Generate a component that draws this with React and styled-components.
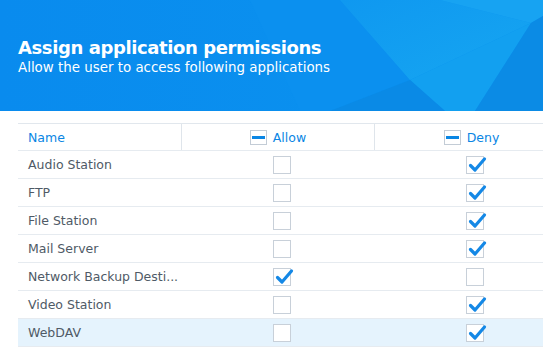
import React from 'react'
import styled, { createGlobalStyle } from 'styled-components'

const GlobalStyle = createGlobalStyle`
  html, body {
    margin: 0;
    padding: 0;
    background: #ffffff;
    overflow: hidden;
  }
  body {
    font-family: "DejaVu Sans", Verdana, sans-serif;
  }
`

const Page = styled.div`
  width: 543px;
  height: 347px;
  overflow: hidden;
`

const Banner = styled.div`
  position: relative;
  height: 111px;
  background: #0a8cee;
  overflow: hidden;
`

const BannerArt = styled.svg`
  position: absolute;
  inset: 0;
  width: 100%;
  height: 100%;
`

const BannerText = styled.div`
  position: relative;
  padding: 37px 0 0 18px;
  color: #ffffff;
`

const Title = styled.h1`
  margin: 0;
  font-size: 18px;
  line-height: 22px;
  font-weight: bold;
  letter-spacing: -0.4px;
`

const Subtitle = styled.p`
  margin: 1px 0 0;
  font-size: 13.4px;
  line-height: 16px;
`

const Table = styled.div`
  margin: 12px 0 0 18px;
  width: 550px;
  border-top: 1px solid #e1e7ed;
`

const Row = styled.div`
  display: grid;
  grid-template-columns: 163px 193px 194px;
  height: ${p => (p.$head ? '26px' : '27px')};
  border-bottom: 1px solid #e6ebf0;
  background: ${p => (p.$selected ? '#e5f3fd' : 'transparent')};
`

const Cell = styled.div`
  display: flex;
  align-items: center;
  justify-content: ${p => (p.$center ? 'center' : 'flex-start')};
  padding: ${p => (p.$center ? '0 0 0 8px' : '0 0 0 10px')};
  font-size: 12.5px;
  color: #4f5a66;
  white-space: nowrap;
  overflow: hidden;
`

const HeadCell = styled.div`
  display: flex;
  align-items: center;
  justify-content: ${p => (p.$center ? 'center' : 'flex-start')};
  gap: 6px;
  padding-left: ${p => (p.$center ? '0' : '10px')};
  font-size: 12.5px;
  color: #0a86e4;
  border-left: ${p => (p.$divider ? '1px solid #dfe5eb' : 'none')};
`

const MinusBox = styled.span`
  position: relative;
  width: 15px;
  height: 13px;
  border: 1px solid #c3ccd6;
  background: #ffffff;
  display: flex;
  align-items: center;
  justify-content: center;
  &::after {
    content: '';
    width: 13px;
    height: 3px;
    background: #0a86e4;
  }
`

const Box = styled.span`
  position: relative;
  display: block;
  width: 16px;
  height: 16px;
  border: 1px solid #c8d0d9;
  background: #ffffff;
`

const Tick = styled.svg`
  position: absolute;
  left: 1px;
  top: -2px;
  width: 18px;
  height: 18px;
  overflow: visible;
`

function Checkbox({ checked }) {
  return (
    <Box>
      {checked && (
        <Tick viewBox="0 0 18 18">
          <path d="M2.5 10.5 L7 15 L16.5 4" fill="none" stroke="#1488e6" strokeWidth="3.2" strokeLinecap="round" strokeLinejoin="round" />
        </Tick>
      )}
    </Box>
  )
}

const apps = [
  { name: 'Audio Station', allow: false },
  { name: 'FTP', allow: false },
  { name: 'File Station', allow: false },
  { name: 'Mail Server', allow: false },
  { name: 'Network Backup Desti...', allow: true },
  { name: 'Video Station', allow: false },
  { name: 'WebDAV', allow: false, selected: true },
]

export default function App() {
  return (
    <Page>
      <GlobalStyle />
      <Banner>
        <BannerArt viewBox="0 0 543 111" preserveAspectRatio="none">
          <defs>
            <linearGradient id="bg" x1="0" y1="0" x2="1" y2="0">
              <stop offset="0" stopColor="#098bee" />
              <stop offset="1" stopColor="#0b93ef" />
            </linearGradient>
            <linearGradient id="glow" x1="0" y1="0" x2="1" y2="1">
              <stop offset="0" stopColor="#0f98f0" />
              <stop offset="1" stopColor="#16a6f1" />
            </linearGradient>
          </defs>
          <rect width="543" height="111" fill="url(#bg)" />
          <polygon points="250,0 340,0 410,80 330,111 300,111" fill="#0b90ef" />
          <polygon points="340,0 440,0 531,23 410,80" fill="url(#glow)" />
          <polygon points="440,0 543,0 543,16 531,23" fill="#17a3f2" />
          <polygon points="410,80 531,23 475,111 445,111" fill="#12a0f0" />
          <polygon points="330,111 410,80 445,111" fill="#0a8ae6" />
          <polygon points="531,23 543,16 543,111 475,111" fill="#0b8be5" />
        </BannerArt>
        <BannerText>
          <Title>Assign application permissions</Title>
          <Subtitle>Allow the user to access following applications</Subtitle>
        </BannerText>
      </Banner>
      <Table>
        <Row $head>
          <HeadCell>Name</HeadCell>
          <HeadCell $center $divider>
            <MinusBox />
            Allow
          </HeadCell>
          <HeadCell $center $divider>
            <MinusBox />
            Deny
          </HeadCell>
        </Row>
        {apps.map(app => (
          <Row key={app.name} $selected={app.selected}>
            <Cell>{app.name}</Cell>
            <Cell $center>
              <Checkbox checked={app.allow} />
            </Cell>
            <Cell $center>
              <Checkbox checked={!app.allow} />
            </Cell>
          </Row>
        ))}
      </Table>
    </Page>
  )
}
